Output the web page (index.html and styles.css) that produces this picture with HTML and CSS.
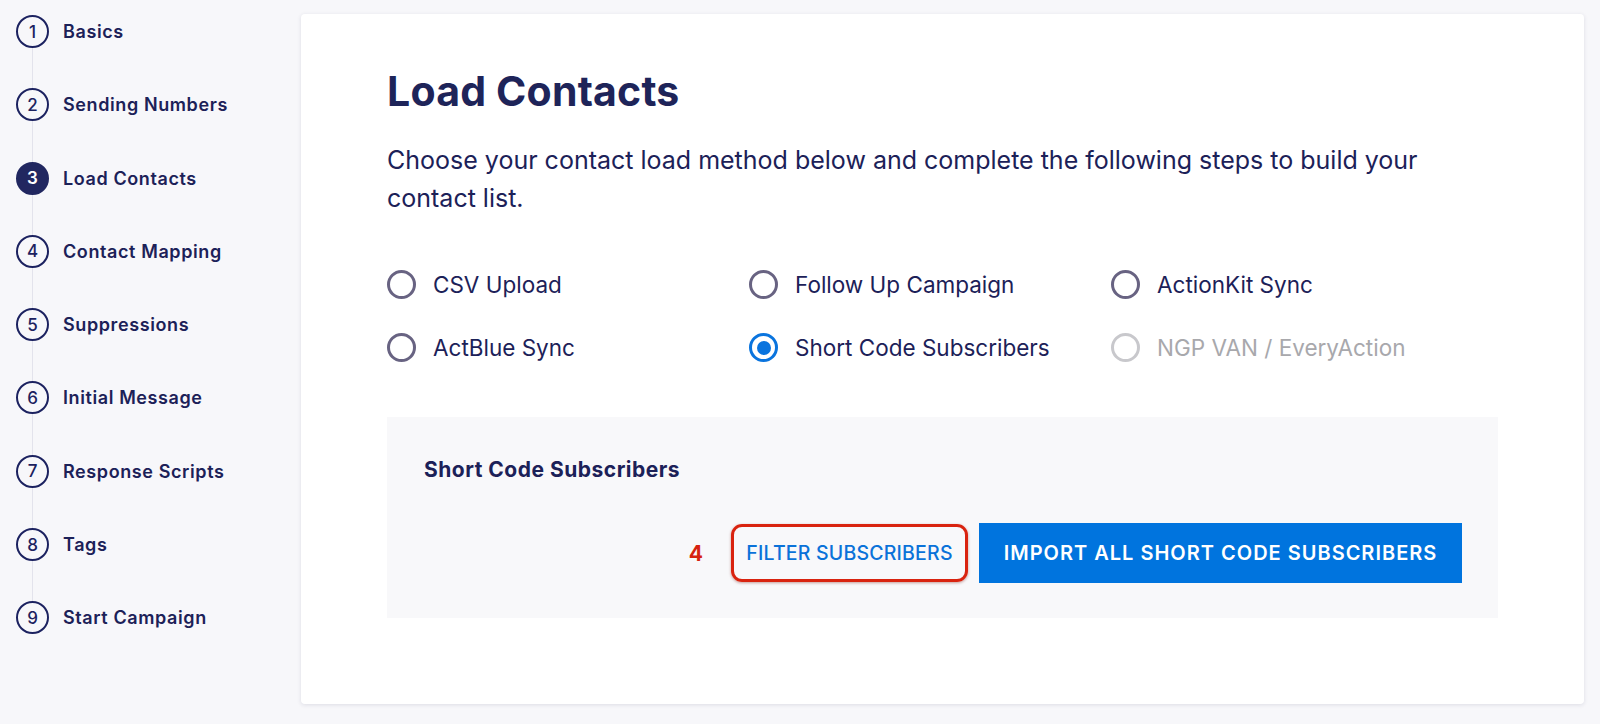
FILE: index.html
```html
<!DOCTYPE html>
<html>
<head>
<meta charset="utf-8">
<title>Load Contacts</title>
<link rel="stylesheet" href="styles.css">
</head>
<body>
<div class="page">
  <nav class="steps">
    <div class="step"><span class="num">1</span><span class="label">Basics</span></div>
    <div class="step"><span class="num">2</span><span class="label">Sending Numbers</span></div>
    <div class="step active"><span class="num">3</span><span class="label">Load Contacts</span></div>
    <div class="step"><span class="num">4</span><span class="label">Contact Mapping</span></div>
    <div class="step"><span class="num">5</span><span class="label">Suppressions</span></div>
    <div class="step"><span class="num">6</span><span class="label">Initial Message</span></div>
    <div class="step"><span class="num">7</span><span class="label">Response Scripts</span></div>
    <div class="step"><span class="num">8</span><span class="label">Tags</span></div>
    <div class="step last"><span class="num">9</span><span class="label">Start Campaign</span></div>
  </nav>
  <main class="card">
    <h1 class="title">Load Contacts</h1>
    <p class="intro">Choose your contact load method below and complete the following steps to build your contact list.</p>
    <div class="options">
      <div class="opt"><span class="radio"></span><span class="opt-label">CSV Upload</span></div>
      <div class="opt"><span class="radio"></span><span class="opt-label">Follow Up Campaign</span></div>
      <div class="opt"><span class="radio"></span><span class="opt-label">ActionKit Sync</span></div>
      <div class="opt"><span class="radio"></span><span class="opt-label">ActBlue Sync</span></div>
      <div class="opt"><span class="radio checked"></span><span class="opt-label">Short Code Subscribers</span></div>
      <div class="opt disabled"><span class="radio"></span><span class="opt-label">NGP VAN / EveryAction</span></div>
    </div>
    <section class="panel">
      <h2 class="panel-title">Short Code Subscribers</h2>
      <div class="actions">
        <span class="marker">4</span>
        <button class="btn-text">FILTER SUBSCRIBERS</button>
        <button class="btn-primary">IMPORT ALL SHORT CODE SUBSCRIBERS</button>
      </div>
    </section>
  </main>
</div>
</body>
</html>
```

FILE: styles.css
```css
* { box-sizing: border-box; }
html, body { margin: 0; padding: 0; }
body {
  background: #f7f7fa;
  font-family: "Inter", "Open Sans", sans-serif;
  color: #1c2158;
  width: 1600px;
  height: 724px;
  overflow: hidden;
}
.page {
  display: flex;
  align-items: flex-start;
}
.steps {
  width: 301px;
  flex: none;
  padding: 15px 0 0 16px;
  display: flex;
  flex-direction: column;
}
.step {
  display: flex;
  gap: 14px;
  height: 73.3px;
  align-items: flex-start;
  position: relative;
}
.step::after {
  content: "";
  position: absolute;
  left: 16px;
  top: 33px;
  width: 1px;
  height: 40.3px;
  background: #e3e3ec;
}
.step.last::after { display: none; }
.num {
  width: 33px;
  height: 33px;
  border: 2.5px solid #1c2260;
  border-radius: 50%;
  display: flex;
  align-items: center;
  justify-content: center;
  font-size: 17px;
  font-weight: 500;
  color: #1c2260;
  background: #f7f7fa;
}
.step.active .num {
  background: #212760;
  color: #fff;
  border-color: #212760;
  font-weight: 600;
}
.label {
  font-size: 18px;
  font-weight: 600;
  letter-spacing: 0.6px;
  line-height: 33px;
  color: #1c2158;
}
.card {
  margin-top: 14px;
  width: 1283px;
  height: 690px;
  background: #fff;
  border-radius: 4px;
  box-shadow: 0 1px 4px rgba(30, 30, 70, 0.12);
  padding: 52px 86px 0 86px;
}
.title {
  margin: 0;
  font-size: 41px;
  font-weight: 700;
  line-height: 50px;
  color: #1e2459;
  letter-spacing: 0.2px;
}
.intro {
  margin: 26px 0 0 0;
  font-size: 25px;
  line-height: 37.5px;
  font-weight: 400;
  color: #1c2158;
}
.options {
  margin-top: 51.5px;
  display: grid;
  grid-template-columns: repeat(3, 362px);
  row-gap: 31.3px;
}
.opt {
  display: flex;
  align-items: center;
  gap: 17px;
  height: 32px;
}
.radio {
  width: 29px;
  height: 29px;
  border: 3px solid #686382;
  border-radius: 50%;
  flex: none;
  display: flex;
  align-items: center;
  justify-content: center;
}
.radio.checked {
  border-color: #0a74de;
}
.radio.checked::before {
  content: "";
  width: 14px;
  height: 14px;
  border-radius: 50%;
  background: #0a74de;
}
.opt-label {
  font-size: 22.5px;
  color: #1c2158;
}
.opt.disabled .radio { border-color: #c8c8cc; }
.opt.disabled .opt-label { color: #a8a8ac; }
.panel {
  margin-top: 53px;
  background: #f8f8fa;
  padding: 41px 36px 35px 37px;
}
.panel-title {
  margin: 0;
  font-size: 21px;
  font-weight: 700;
  letter-spacing: 0.5px;
  line-height: 24px;
  color: #1c2158;
}
.actions {
  margin-top: 41.5px;
  display: flex;
  justify-content: flex-end;
  align-items: center;
}
.marker {
  color: #d6220f;
  font-size: 21px;
  font-weight: 700;
  margin-right: 28px;
}
.btn-text {
  font-family: inherit;
  background: transparent;
  border: 3px solid #d9230f;
  border-radius: 11px;
  box-shadow: 0 1px 3px rgba(120, 20, 10, 0.4);
  color: #0a72d9;
  font-size: 19.5px;
  font-weight: 500;
  letter-spacing: 0.2px;
  height: 58px;
  width: 237px;
  padding: 0;
  margin-right: 11px;
  cursor: pointer;
}
.btn-primary {
  font-family: inherit;
  background: #0074de;
  border: none;
  color: #fff;
  font-size: 20px;
  font-weight: 600;
  letter-spacing: 1px;
  height: 60px;
  width: 483px;
  padding: 0;
  cursor: pointer;
}
```
